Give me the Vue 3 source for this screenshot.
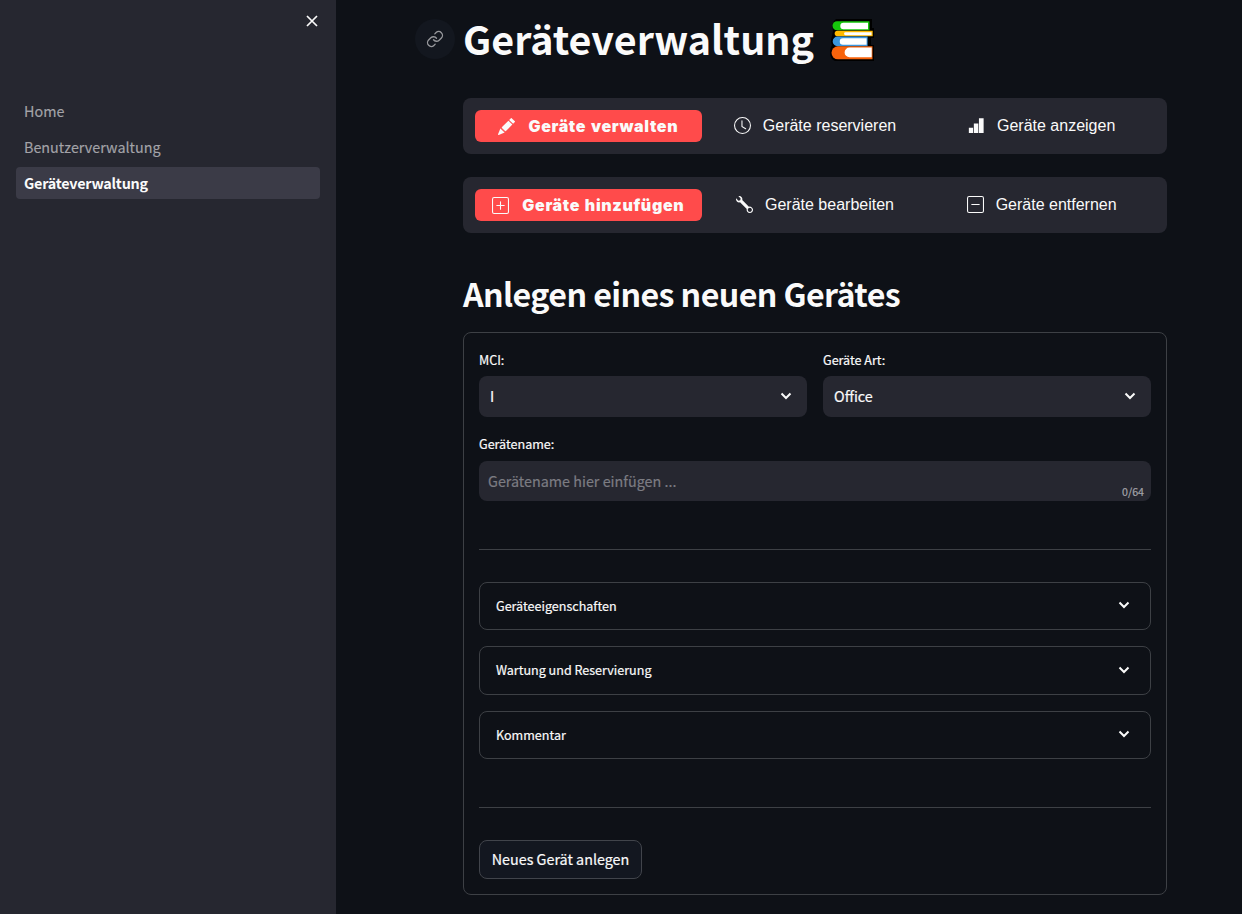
<script setup>
const pages = [
  { name: 'Home' },
  { name: 'Benutzerverwaltung' },
  { name: 'Geräteverwaltung', active: true },
]
const menus = [
  [
    { label: 'Geräte verwalten', icon: 'pencil', active: true },
    { label: 'Geräte reservieren', icon: 'clock' },
    { label: 'Geräte anzeigen', icon: 'bars' },
  ],
  [
    { label: 'Geräte hinzufügen', icon: 'plus', active: true },
    { label: 'Geräte bearbeiten', icon: 'wrench' },
    { label: 'Geräte entfernen', icon: 'dash' },
  ],
]
const icons = {
  pencil: 'M12.854.146a.5.5 0 0 0-.707 0L10.5 1.793 14.207 5.5l1.647-1.646a.5.5 0 0 0 0-.708zm.646 6.061L9.793 2.5 3.293 9H3.5a.5.5 0 0 1 .5.5v.5h.5a.5.5 0 0 1 .5.5v.5h.5a.5.5 0 0 1 .5.5v.5h.5a.5.5 0 0 1 .5.5v.207zm-7.468 7.468A.5.5 0 0 1 6 13.5V13h-.5a.5.5 0 0 1-.5-.5V12h-.5a.5.5 0 0 1-.5-.5V11h-.5a.5.5 0 0 1-.5-.5V10h-.5a.5.5 0 0 1-.175-.032l-.179.178a.5.5 0 0 0-.11.168l-2 5a.5.5 0 0 0 .65.65l5-2a.5.5 0 0 0 .168-.11z',
  clock: 'M8 3.5a.5.5 0 0 0-1 0V9a.5.5 0 0 0 .252.434l3.5 2a.5.5 0 0 0 .496-.868L8 8.71zM8 16A8 8 0 1 0 8 0a8 8 0 0 0 0 16m7-8A7 7 0 1 1 1 8a7 7 0 0 1 14 0',
  bars: 'M.8 10.2h4V15h-4zM5.5 6h4.200v9H5.500zM10.300 1.200h4.400V15h-4.400z',
  plus: 'M14 1a1 1 0 0 1 1 1v12a1 1 0 0 1-1 1H2a1 1 0 0 1-1-1V2a1 1 0 0 1 1-1zM2 0a2 2 0 0 0-2 2v12a2 2 0 0 0 2 2h12a2 2 0 0 0 2-2V2a2 2 0 0 0-2-2zM8 4a.5.5 0 0 1 .5.5v3h3a.5.5 0 0 1 0 1h-3v3a.5.5 0 0 1-1 0v-3h-3a.5.5 0 0 1 0-1h3v-3A.5.5 0 0 1 8 4',
  wrench: 'M.102 2.223A3.004 3.004 0 0 0 3.78 5.897l6.341 6.252A3.003 3.003 0 0 0 13 16a3 3 0 1 0-.851-5.878L5.897 3.781A3.004 3.004 0 0 0 2.223.1l2.141 2.142L4 4l-1.757.364zm13.37 9.019.528.026.287.445.445.287.026.529L15 13l-.242.471-.026.529-.445.287-.287.445-.529.026L13 15l-.471-.242-.529-.026-.287-.445-.445-.287-.026-.529L11 13l.242-.471.026-.529.445-.287.287-.445.529-.026L13 11z',
  dash: 'M14 1a1 1 0 0 1 1 1v12a1 1 0 0 1-1 1H2a1 1 0 0 1-1-1V2a1 1 0 0 1 1-1zM2 0a2 2 0 0 0-2 2v12a2 2 0 0 0 2 2h12a2 2 0 0 0 2-2V2a2 2 0 0 0-2-2zM4 8a.5.5 0 0 1 .5-.5h7a.5.5 0 0 1 0 1h-7A.5.5 0 0 1 4 8',
}
const selects = [
  { label: 'MCI:', value: 'I' },
  { label: 'Geräte Art:', value: 'Office' },
]
const expanders = ['Geräteeigenschaften', 'Wartung und Reservierung', 'Kommentar']
</script>

<template>
  <div class="app">
    <aside class="sidebar">
      <button class="close" aria-label="Close">
        <svg width="12" height="12" viewBox="0 0 12 12"><path d="M1 1l10 10M11 1L1 11" /></svg>
      </button>
      <nav>
        <a v-for="p in pages" :key="p.name" class="page" :class="{ active: p.active }">{{ p.name }}</a>
      </nav>
    </aside>

    <main class="main">
      <header class="title">
        <span class="anchor">
          <svg width="18" height="18" viewBox="0 0 24 24">
            <path d="M10 13a5 5 0 0 0 7.540.540l3-3a5 5 0 0 0-7.070-7.070l-1.720 1.710" />
            <path d="M14 11a5 5 0 0 0-7.540-.540l-3 3a5 5 0 0 0 7.070 7.070l1.710-1.710" />
          </svg>
        </span>
        <h1>Geräteverwaltung</h1>
        <svg class="books" width="46" height="46" viewBox="0 0 46 46">
          <path fill="#000" d="M7 2H43V11H45V21H42V28H45V44H6Q1 42 1 35Q1 31 3 28Q1 24 3 19L4 14Q2 5 7 2Z" />
          <path fill="#16c60c" d="M8 4.300H40.500V13.300H8A4.500 4.500 0 0 1 8 4.300Z" />
          <path fill="#fff" d="M14.500 5.800H39V12.200H14.500A3.200 3.200 0 0 1 14.500 5.800Z" />
          <path fill="#ffb900" d="M8.500 13.700H43.700V19.300H8.500A2.800 2.800 0 0 1 8.500 13.700Z" />
          <path fill="#fff" d="M16.500 15.300H42.500V18.200H16.500A1.450 1.450 0 0 1 16.500 15.300Z" />
          <path fill="#3a96dd" d="M8.500 19.600H38.600V29.200H8.500A4.800 4.800 0 0 1 8.500 19.600Z" />
          <path fill="#fff" d="M14 21.200H37.600V27.700H14A3.250 3.250 0 0 1 14 21.200Z" />
          <path fill="#f7630c" d="M9 29.300H43.500V42.300H9A6.500 6.500 0 0 1 9 29.300Z" />
          <path fill="#fff" d="M20.500 30.500H42.700V40.300H20.500A4.900 4.900 0 0 1 20.500 30.500Z" />
        </svg>
      </header>

      <ul v-for="(menu, i) in menus" :key="i" class="menu">
        <li v-for="m in menu" :key="m.label" :class="{ active: m.active }">
          <svg width="17" height="17" viewBox="0 0 16 16"><path :d="icons[m.icon]" /></svg>
          <span>{{ m.label }}</span>
        </li>
      </ul>

      <h2>Anlegen eines neuen Gerätes</h2>

      <form class="form" @submit.prevent>
        <div class="columns">
          <div v-for="s in selects" :key="s.label">
            <label>{{ s.label }}</label>
            <div class="select">
              <span>{{ s.value }}</span>
              <svg class="chevron" width="12" height="8" viewBox="0 0 12 8"><path d="M1.500 1.500L6 6L10.500 1.500" /></svg>
            </div>
          </div>
        </div>
        <label class="name-label">Gerätename:</label>
        <div class="input">
          <span>Gerätename hier einfügen ...</span>
          <small>0/64</small>
        </div>
        <hr />
        <div class="expanders">
          <div v-for="e in expanders" :key="e" class="expander">
            <span>{{ e }}</span>
            <svg class="chevron" width="12" height="8" viewBox="0 0 12 8"><path d="M1.500 1.500L6 6L10.500 1.500" /></svg>
          </div>
        </div>
        <hr />
        <button class="submit">Neues Gerät anlegen</button>
      </form>
    </main>
  </div>
</template>

<style>
body { background: #0e1117; overflow: hidden; }
</style>

<style scoped>
* { box-sizing: border-box; }
.app {
  display: flex;
  height: 914px;
  overflow: hidden;
  background: #0e1117;
  color: #fafafa;
  font-family: "Noto Sans CJK SC", "Noto Sans", sans-serif;
  font-size: 14.35px;
}
.sidebar { width: 336px; flex: none; background: #262730; }
.close {
  display: flex;
  margin: 15px 18px 0 auto;
  padding: 0;
  border: 0;
  background: none;
}
.close path { stroke: #fafafa; stroke-width: 1.7; fill: none; }
nav { margin: 68px 16px 0; display: grid; gap: 4px; }
.page {
  height: 32px;
  padding-left: 8px;
  border-radius: 4px;
  line-height: 32px;
  color: #a3a3a8;
  -webkit-text-stroke: 0.15px currentColor;
}
.page.active { background: #3b3b47; color: #fafafa; font-weight: 700; letter-spacing: -0.24px; -webkit-text-stroke: 0; }
.main { width: 704px; margin-left: 127px; }
.title { display: flex; height: 98px; margin-left: -48px; }
.anchor {
  width: 40px;
  height: 40px;
  margin: 19px 8px 0 0;
  display: grid;
  place-items: center;
  border-radius: 50%;
  background: #13171f;
}
.anchor path { fill: none; stroke: #96979b; stroke-width: 1.8; stroke-linecap: round; stroke-linejoin: round; }
h1 { margin: 12px 0 0; font-size: 39.450px; line-height: 51px; height: 52px; white-space: nowrap; }
.books { margin: 17px 0 0 14.500px; }
.menu {
  display: grid;
  grid-template-columns: repeat(3, 1fr);
  height: 56px;
  margin: 0 0 23px;
  padding: 12px;
  border-radius: 8px;
  background: #262730;
  list-style: none;
  font: 16px "Liberation Sans", sans-serif;
}
.menu li { display: flex; align-items: center; justify-content: center; gap: 12px; border-radius: 6px; padding-bottom: 1px; }
.menu li.active {
  gap: 13px;
  padding-bottom: 0;
  background: #ff4b4b;
  font-family: Inter, "Liberation Sans", sans-serif;
  font-weight: 900;
  letter-spacing: 0.65px;
  word-spacing: 1px;
}
.menu svg { fill: #fafafa; flex: none; }
h2 { margin: 36px 0 0; font-size: 32.200px; line-height: 48px; height: 63px; font-weight: 700; letter-spacing: -0.6px; white-space: nowrap; }
.form { height: 563px; padding: 15px; border: 1px solid #3d4045; border-radius: 8px; -webkit-text-stroke: 0.2px currentColor; }
.columns { display: grid; grid-template-columns: 1fr 1fr; gap: 16px; }
label { display: block; height: 28px; line-height: 24px; font-size: 12.550px; }
.select, .input {
  display: flex;
  align-items: center;
  justify-content: space-between;
  height: 41px;
  padding: 0 15px 2px 11px;
  border-radius: 8px;
  background: #262730;
}
.chevron path { fill: none; stroke: #fafafa; stroke-width: 2; }
.name-label { height: 29px; margin-top: 15px; }
.input { height: 40px; padding: 0 7px 2px 9px; color: #7c7c83; }
.input small { align-self: flex-end; font-size: 10.700px; line-height: 14px; color: #a3a3a8; }
hr { height: 1px; margin: 48px 0 32px; border: 0; background: #3d4045; }
.expanders { display: grid; grid-template-rows: 48px 49px 48px; gap: 16px; }
.expander {
  display: flex;
  align-items: center;
  justify-content: space-between;
  padding: 0 20px 2px 16px;
  border: 1px solid #3d4045;
  border-radius: 8px;
  font-size: 12.550px;
}
.submit {
  display: block;
  width: 163px;
  height: 39px;
  padding: 0 0 2px;
  border: 1px solid #41444b;
  border-radius: 8px;
  background: #131720;
  color: #fafafa;
  font: inherit;
  -webkit-text-stroke: 0.2px currentColor;
  white-space: nowrap;
}
</style>
